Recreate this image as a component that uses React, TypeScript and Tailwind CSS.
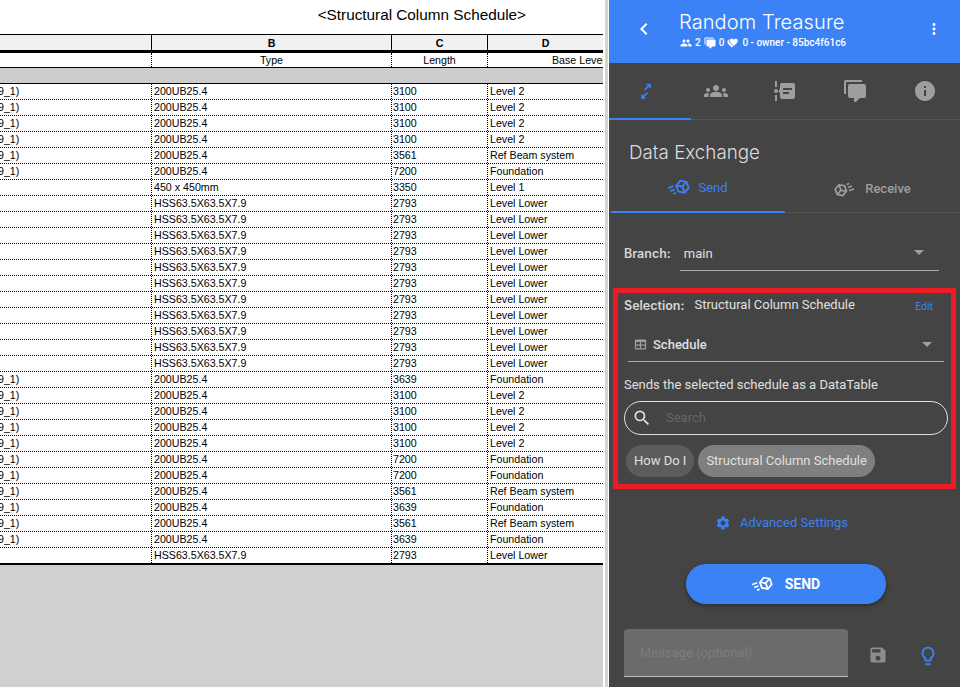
import {
  MdArrowDropDown,
  MdChevronLeft,
  MdGroups,
  MdInfo,
  MdLightbulbOutline,
  MdMoreVert,
  MdPeople,
  MdSave,
  MdSearch,
  MdSettings,
} from "react-icons/md";

const BEAM = "200UB25.4";
const HSS = "HSS63.5X63.5X7.9";

// [has family suffix, type, length, base level]
const rows: [boolean, string, string, string][] = [
  [true, BEAM, "3100", "Level 2"],
  [true, BEAM, "3100", "Level 2"],
  [true, BEAM, "3100", "Level 2"],
  [true, BEAM, "3100", "Level 2"],
  [true, BEAM, "3561", "Ref Beam system"],
  [true, BEAM, "7200", "Foundation"],
  [false, "450 x 450mm", "3350", "Level 1"],
  [false, HSS, "2793", "Level Lower"],
  [false, HSS, "2793", "Level Lower"],
  [false, HSS, "2793", "Level Lower"],
  [false, HSS, "2793", "Level Lower"],
  [false, HSS, "2793", "Level Lower"],
  [false, HSS, "2793", "Level Lower"],
  [false, HSS, "2793", "Level Lower"],
  [false, HSS, "2793", "Level Lower"],
  [false, HSS, "2793", "Level Lower"],
  [false, HSS, "2793", "Level Lower"],
  [false, HSS, "2793", "Level Lower"],
  [true, BEAM, "3639", "Foundation"],
  [true, BEAM, "3100", "Level 2"],
  [true, BEAM, "3100", "Level 2"],
  [true, BEAM, "3100", "Level 2"],
  [true, BEAM, "3100", "Level 2"],
  [true, BEAM, "7200", "Foundation"],
  [true, BEAM, "7200", "Foundation"],
  [true, BEAM, "3561", "Ref Beam system"],
  [true, BEAM, "3639", "Foundation"],
  [true, BEAM, "3561", "Ref Beam system"],
  [true, BEAM, "3639", "Foundation"],
  [false, HSS, "2793", "Level Lower"],
];

const HEART =
  "M12 21.35l-1.45-1.32C5.4 15.36 2 12.28 2 8.5 2 5.42 4.42 3 7.5 3c1.74 0 3.41.81 4.5 2.09C13.09 3.81 14.76 3 16.5 3 19.58 3 22 5.42 22 8.5c0 3.78-3.4 6.86-8.55 11.54L12 21.35z";
const COMMENTS =
  "M12,23A1,1 0 0,1 11,22V19H7A2,2 0 0,1 5,17V7A2,2 0 0,1 7,5H21A2,2 0 0,1 23,7V17A2,2 0 0,1 21,19H16.9L13.2,22.71C13,22.89 12.76,23 12.5,23H12M3,15H1V3A2,2 0 0,1 3,1H19V3H3V15Z";
const CUBE =
  "M16,4L9,8.04V15.96L16,20L23,15.96V8.04M16,6.31L19.8,8.5L16,10.69L12.21,8.5M0,7V9H7V7M11,10.11L15,12.42V17.11L11,14.81M21,10.11V14.81L17,17.11V12.42M2,11V13H7V11M4,15V17H7V15";

function CommentsIcon({ className }: { className: string }) {
  return (
    <svg viewBox="0 0 24 24" fill="currentColor" className={className}>
      <path d={COMMENTS} />
    </svg>
  );
}

function HeartsIcon({ className }: { className: string }) {
  return (
    <svg viewBox="0 0 24 24" fill="currentColor" className={className}>
      <g transform="translate(-1 2) scale(0.9)">
        <path d={HEART} />
      </g>
      <g transform="translate(3 0) scale(0.88)">
        <path d={HEART} stroke="#3b82f6" strokeWidth="2" />
      </g>
    </svg>
  );
}

function SendCube({ className }: { className: string }) {
  return (
    <svg viewBox="0 0 24 24" fill="currentColor" className={className}>
      <path d={CUBE} transform="rotate(-20 12 12)" />
    </svg>
  );
}

function ReceiveCube({ className }: { className: string }) {
  return (
    <svg viewBox="0 0 24 24" fill="currentColor" className={className}>
      <path d={CUBE} transform="rotate(160 12 12)" />
    </svg>
  );
}

function TimelineIcon({ className }: { className: string }) {
  return (
    <svg viewBox="0 0 24 24" fill="currentColor" className={className}>
      <path d="M2 2h2v6H2zM2 16h2v6H2z" />
      <circle cx="3" cy="12" r="2" />
      <path
        fillRule="evenodd"
        d="M9 4h11a2 2 0 0 1 2 2v12a2 2 0 0 1-2 2H9a2 2 0 0 1-2-2v-3.5L5.5 12 7 9.5V6a2 2 0 0 1 2-2zm1 5v2h9V9zm0 4v2h6v-2z"
      />
    </svg>
  );
}

function ExchangeIcon({ className }: { className: string }) {
  return (
    <svg viewBox="0 0 24 24" fill="none" stroke="currentColor" strokeWidth="1.7" className={className}>
      <path d="M12.500 5.500h3.500v3.500M16 5.500l-5.500 5.500M8 15.500v3.500h3.500M8 19l5.500-5.500" />
    </svg>
  );
}

function TableIcon({ className }: { className: string }) {
  return (
    <svg viewBox="0 0 24 24" fill="currentColor" className={className}>
      <path d="M5 4h14a2 2 0 0 1 2 2v12a2 2 0 0 1-2 2H5a2 2 0 0 1-2-2V6a2 2 0 0 1 2-2zm0 4v4h6V8zm8 0v4h6V8zm-8 6v4h6v-4zm8 0v4h6v-4z" />
    </svg>
  );
}

function Schedule() {
  return (
    <div className="flex w-[605px] shrink-0 flex-col bg-white font-['Liberation_Sans',sans-serif] text-[10.67px] leading-[15px] text-black">
      <div className="h-[34px] pr-[79px] pt-[5px] text-right text-[15.3px] leading-[20px]">
        &lt;Structural Column Schedule&gt;
      </div>
      <div className="w-[603px]">
        {/* column letters */}
        <div className="flex h-[19px] border-t border-b-[3px] border-black bg-[#f0f0f0] text-center font-bold">
          <div className="w-[151px]" />
          <div className="w-[240px] border-l border-black pt-[1px]">B</div>
          <div className="w-[96px] border-l border-black pt-[1px]">C</div>
          <div className="flex-1 border-l border-black pt-[1px]">D</div>
        </div>
        {/* headings */}
        <div className="flex h-[15px] border-b border-black text-center">
          <div className="w-[151px]" />
          <div className="w-[240px] border-l border-dotted border-black">Type</div>
          <div className="w-[96px] border-l border-dotted border-black">Length</div>
          <div className="flex-1 overflow-hidden whitespace-nowrap border-l border-dotted border-black pl-[64px] text-left">
            Base Level
          </div>
        </div>
        <div className="h-[16px] border-b border-black bg-[#cdcdcd]" />
        {rows.map(([family, type, length, level], i) => (
          <div key={i} className="flex h-[16px] border-b border-dotted border-black">
            <div className="w-[151px] overflow-hidden">
              <span className="-ml-[2px] block">{family ? "9_1)" : ""}</span>
            </div>
            <div className="w-[240px] border-l border-dotted border-black pl-[2px]">{type}</div>
            <div className="w-[96px] border-l border-dotted border-black pl-[1px]">{length}</div>
            <div className="flex-1 border-l border-dotted border-black pl-[2px]">{level}</div>
          </div>
        ))}
        <div className="border-t-2 border-black -mt-[1px]" />
      </div>
      <div className="w-[603px] flex-1 bg-[#d0d0d0]" />
    </div>
  );
}

function Panel() {
  return (
    <div className="flex h-full w-[351px] shrink-0 flex-col overflow-hidden bg-[#444444] font-['Roboto',sans-serif] text-[#e0e0e0]">
      {/* app bar */}
      <div className="flex h-[63px] shrink-0 items-center bg-[#3b82f6] text-white">
        <MdChevronLeft className="mb-[6px] ml-[23px] h-6 w-6 shrink-0" />
        <div className="ml-[23px] flex-1 pb-[4px]">
          <div className="font-['Inter',sans-serif] text-[20px] font-light leading-[24px] tracking-[0.1px]">
            Random Treasure
          </div>
          <div className="mt-[2px] flex items-center pl-[1px] text-[10px] font-medium leading-[14px]">
            <MdPeople className="h-[12px] w-[12px]" />
            <span className="ml-[3px]">2</span>
            <CommentsIcon className="ml-[3px] h-[12px] w-[12px]" />
            <span className="ml-[3px]">0</span>
            <HeartsIcon className="ml-[3px] h-[12px] w-[12px]" />
            <span className="ml-[3px]">0 - owner - 85bc4f61c6</span>
          </div>
        </div>
        <MdMoreVert className="mb-[6px] mr-[17px] h-[18px] w-[18px]" />
      </div>

      {/* main tabs */}
      <div className="relative flex h-[57px] shrink-0 border-b border-[#555555] pl-[2px] text-[#9e9e9e]">
        <div className="flex w-[70px] items-center justify-center text-[#3b82f6]">
          <ExchangeIcon className="h-6 w-6" />
        </div>
        <div className="flex w-[70px] items-center justify-center">
          <MdGroups className="h-6 w-6" />
        </div>
        <div className="flex w-[70px] items-center justify-center">
          <TimelineIcon className="h-6 w-6" />
        </div>
        <div className="flex w-[70px] items-center justify-center">
          <CommentsIcon className="h-6 w-6" />
        </div>
        <div className="flex w-[70px] items-center justify-center">
          <MdInfo className="h-6 w-6" />
        </div>
        <div className="absolute -bottom-[1px] left-0 h-[2px] w-[82px] bg-[#3b82f6]" />
      </div>

      <div className="ml-[20px] mt-[20px] font-['Inter',sans-serif] text-[18.8px] font-light leading-[26px] text-[#dddddd]">
        Data Exchange
      </div>

      {/* send / receive */}
      <div className="ml-[2px] flex h-[47px] shrink-0 border-b border-[#555555] text-[13px]">
        <div className="-mb-[1px] flex w-[174px] items-center justify-center gap-[8px] border-b-2 border-[#3b82f6] pb-[1px] text-[#3b82f6]">
          <SendCube className="h-[22px] w-[22px]" />
          Send
        </div>
        <div className="flex flex-1 items-center justify-center gap-[11px] pb-[1px] font-medium text-[#9e9e9e]">
          <ReceiveCube className="h-[20px] w-[20px]" />
          Receive
        </div>
      </div>

      {/* branch */}
      <div className="ml-[15px] mr-[21px] mt-[22px] flex items-center">
        <span className="mt-[3px] font-['Inter',sans-serif] text-[12.5px] font-semibold text-[#d6d6d6]">Branch:</span>
        <div className="ml-[9px] flex h-[36px] flex-1 items-center border-b border-[#a8a8a8] pb-[1px] pl-[4px] text-[13px]">
          <span className="mt-[3px] flex-1">main</span>
          <MdArrowDropDown className="mr-[8px] h-6 w-6 text-[#9e9e9e]" />
        </div>
      </div>

      {/* highlighted selection */}
      <div className="ml-[4px] mr-[4px] mt-[17px] h-[201px] shrink-0 border-[5px] border-[#ed1c24] px-[6px] pt-[2px]">
        <div className="flex items-start pt-[1px]">
          <span className="font-['Inter',sans-serif] text-[12.5px] font-semibold leading-[20px] text-[#d6d6d6]">
            Selection:
          </span>
          <span className="ml-[10px] flex-1 text-[13px] leading-[18px]">Structural Column Schedule</span>
          <span className="mr-[12px] mt-[3px] text-[10.5px] text-[#3b82f6]">Edit</span>
        </div>
        <div className="ml-[4px] mr-[1px] mt-[10px] flex h-[36px] items-center border-b border-[#a8a8a8] pl-[5px] pt-[2px] text-[13px] font-medium">
          <TableIcon className="h-[15px] w-[15px] text-[#9e9e9e]" />
          <span className="ml-[5px] flex-1">Schedule</span>
          <MdArrowDropDown className="mb-[2px] mr-[5px] h-6 w-6 text-[#9e9e9e]" />
        </div>
        <div className="mt-[14px] text-[13px] leading-[18px]">
          Sends the selected schedule as a DataTable
        </div>
        <div className="mr-[-3px] mt-[7px] flex h-[34px] items-center rounded-full border border-[#e0e0e0] pl-[7px] text-[13px] text-[#666666]">
          <MdSearch className="h-[20px] w-[20px] text-[#e0e0e0]" />
          <span className="ml-[14px]">Search</span>
        </div>
        <div className="ml-[2px] mt-[10px] flex gap-[4px] text-[13px] font-normal leading-[32px]">
          <span className="rounded-full bg-[#5c5c5c] px-[8px]">How Do I</span>
          <span className="rounded-full bg-[#7f7f7f] px-[8px]">Structural Column Schedule</span>
        </div>
      </div>

      <div className="mt-[23px] flex items-center justify-center gap-[9px] pr-[6px] pt-[1px] text-[13px] leading-[20px] text-[#3b82f6]">
        <MdSettings className="h-[16px] w-[16px]" />
        Advanced Settings
      </div>

      <div className="ml-[77px] mt-[31px] flex h-[40px] w-[200px] items-center justify-center gap-[12px] rounded-full bg-[#3b82f6] text-[14px] font-bold text-white shadow-[0_2px_4px_rgba(0,0,0,0.35)]">
        <SendCube className="h-[21px] w-[21px]" />
        SEND
      </div>

      {/* commit message */}
      <div className="ml-[15px] mt-[25px] flex">
        <div className="h-[48px] w-[224px] rounded-t-[4px] border-b border-[#bdbdbd] bg-[#6b6b6b] pl-[16px] pt-[15px] text-[13px] leading-[18px] text-[#7d7d7d]">
          Message (optional)
        </div>
        <div className="ml-[20px] mt-[16px] flex gap-[29px]">
          <MdSave className="h-[20px] w-[20px] text-[#8c8c8c]" />
          <MdLightbulbOutline className="h-[22px] w-[22px] text-[#3b82f6]" />
        </div>
      </div>
    </div>
  );
}

export default function App() {
  return (
    <div className="flex h-[687px] w-[960px] overflow-hidden bg-white">
      <Schedule />
      <div className="w-[3px] shrink-0 bg-[#d4d4d4]" />
      <div className="w-[1px] shrink-0 bg-white" />
      <Panel />
    </div>
  );
}
